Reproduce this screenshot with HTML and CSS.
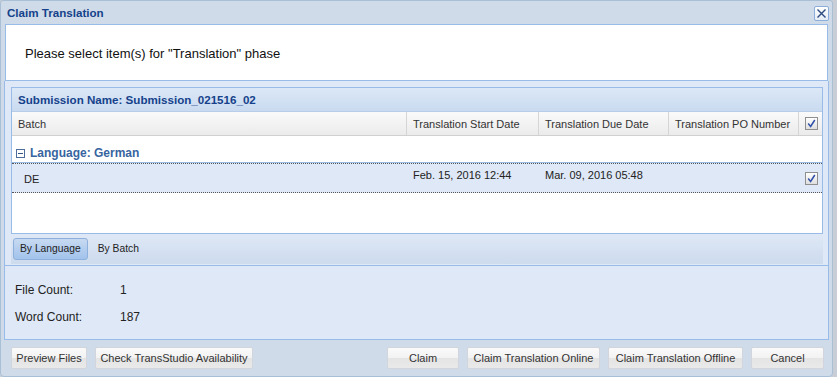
FILE: index.html
```html
<!DOCTYPE html>
<html>
<head>
<meta charset="utf-8">
<link rel="stylesheet" href="styles.css">
</head>
<body>
<div class="win">
  <div class="win-head">
    <span class="title">Claim Translation</span>
    <span class="close"><svg width="11" height="11" viewBox="0 0 11 11"><path d="M1.5 1.5 L9.5 9.5 M9.5 1.5 L1.5 9.5" stroke="#2c4a7e" stroke-width="1.4" fill="none"/></svg></span>
  </div>
  <div class="intro">Please select item(s) for "Translation" phase</div>
  <div class="main">
    <div class="grid">
      <div class="grid-title">Submission Name: Submission_021516_02</div>
      <div class="cols">
        <div class="col c-batch">Batch</div>
        <div class="col c-start">Translation Start Date</div>
        <div class="col c-due">Translation Due Date</div>
        <div class="col c-po">Translation PO Number</div>
        <div class="col c-chk"><span class="chk"><svg width="9" height="9" viewBox="0 0 9 9"><path d="M1.2 4.6 L3.6 7.4 L7.8 1" stroke="#2f4fa8" stroke-width="1.5" fill="none"/></svg></span></div>
      </div>
      <div class="grid-body">
        <div class="group"><span class="minus"></span>Language: German</div>
        <div class="row">
          <div class="cell c-batch dd">DE</div>
          <div class="cell c-start">Feb. 15, 2016 12:44</div>
          <div class="cell c-due">Mar. 09, 2016 05:48</div>
          <div class="cell c-po"></div>
          <div class="cell c-chk"><span class="chk"><svg width="9" height="9" viewBox="0 0 9 9"><path d="M1.2 4.6 L3.6 7.4 L7.8 1" stroke="#2f4fa8" stroke-width="1.5" fill="none"/></svg></span></div>
        </div>
      </div>
    </div>
    <div class="tabs">
      <span class="tab on">By Language</span>
      <span class="tab">By Batch</span>
    </div>
    <div class="counts">
      <div class="count"><span class="lbl">File Count:</span><span>1</span></div>
      <div class="count"><span class="lbl">Word Count:</span><span>187</span></div>
    </div>
  </div>
  <div class="foot">
    <span class="btn w76">Preview Files</span>
    <span class="btn w158">Check TransStudio Availability</span>
    <span class="spacer"></span>
    <span class="btn w72">Claim</span>
    <span class="btn w133">Claim Translation Online</span>
    <span class="btn w135">Claim Translation Offline</span>
    <span class="btn w73">Cancel</span>
  </div>
</div>
</body>
</html>
```

FILE: styles.css
```css
* { box-sizing: border-box; }
html, body { margin: 0; padding: 0; }
body {
  background: #c9ced6;
  font-family: "Liberation Sans", Arial, sans-serif;
  font-size: 11px;
  color: #222;
  width: 837px;
  height: 377px;
  overflow: hidden;
}
.win {
  width: 833px;
  height: 377px;
  background: #cfdbe8;
  border: 1px solid #a9bfd6;
  border-radius: 3px 3px 4px 4px;
  display: flex;
  flex-direction: column;
}
.win-head {
  height: 23px;
  display: flex;
  align-items: center;
  justify-content: space-between;
  padding: 0 3px 0 6px;
}
.title {
  font-weight: bold;
  color: #15428b;
  font-size: 11.6px;
}
.close {
  width: 15px;
  height: 15px;
  border: 1px solid #8daed8;
  border-radius: 2px;
  background: linear-gradient(#ffffff, #e4ecf6);
  display: flex;
  align-items: center;
  justify-content: center;
  margin-top: 1px;
}
.intro {
  margin: 0 4px 0 4px;
  height: 57px;
  background: #fff;
  border: 1px solid #99bbe8;
  padding-left: 19px;
  display: flex;
  align-items: center;
  padding-top: 1px;
  font-size: 13px;
  color: #111;
}
.main {
  margin: 0 3px 0 3px;
  height: 259px;
  background: #dfe8f6;
  border: 1px solid #99bbe8;
  border-top: none;
  display: flex;
  flex-direction: column;
}
.grid {
  margin: 6px 5px 0 6px;
  height: 147px;
  border: 1px solid #99bbe8;
  background: #fff;
  display: flex;
  flex-direction: column;
}
.grid-title {
  height: 24px;
  background: linear-gradient(#dce8f6, #c9daf0);
  border-bottom: 1px solid #b7cde9;
  font-weight: bold;
  font-size: 11.6px;
  color: #15428b;
  padding: 0 6px;
  display: flex;
  align-items: center;
}
.cols {
  height: 24px;
  display: flex;
  background: linear-gradient(#fafafa, #ebebeb);
  border-bottom: 1px solid #d0d0d0;
}
.col {
  display: flex;
  align-items: center;
  padding: 0 6px;
  border-right: 1px solid #d5d5d5;
  color: #333;
}
.c-batch { width: 395px; flex: none; }
.c-start { width: 132px; flex: none; }
.c-due { width: 130px; flex: none; }
.c-po { width: 130px; flex: none; }
.c-chk { flex: 1; justify-content: center; border-right: none; }
.chk {
  width: 13px;
  height: 13px;
  border: 1px solid #8f8f8f;
  background: linear-gradient(#ffffff, #dedede);
  display: flex;
  align-items: center;
  justify-content: center;
}
.grid-body { flex: 1; }
.group {
  height: 28px;
  border-bottom: 2px solid #99bbe8;
  display: flex;
  align-items: center;
  padding-left: 4px;
  padding-top: 8px;
  font-weight: bold;
  font-size: 12px;
  color: #3764a0;
}
.minus {
  width: 9px;
  height: 9px;
  border: 1px solid #4d6d9d;
  margin-right: 5px;
  position: relative;
  background: #fff;
}
.minus::after {
  content: "";
  position: absolute;
  left: 1px;
  right: 1px;
  top: 3px;
  height: 1px;
  background: #36568a;
}
.row {
  height: 30px;
  display: flex;
  background: #dfe8f6;
  border-top: 1px dotted #555;
  border-bottom: 1px dotted #555;
  margin-top: -1px;
}
.cell {
  padding: 5px 6px 0;
  color: #222;
}
.cell.dd { padding-top: 9px; padding-left: 12px; }
.cell.c-chk { display: flex; padding-top: 8px; }
.tabs {
  margin: 0 5px 0 6px;
  height: 30px;
  background: linear-gradient(#dfe8f6, #cddbee);
  display: flex;
  align-items: center;
  gap: 4px;
  padding-left: 2px;
  border-bottom: 1px solid #cfdcec;
}
.tab {
  height: 22px;
  display: flex;
  align-items: center;
  padding: 0 6px;
  color: #222;
  font-size: 10.3px;
}
.tab.on {
  border: 1px solid #8eb0dc;
  border-radius: 3px;
  background: linear-gradient(#c8daf1, #b3cdee 50%, #a3c3ec);
}
.counts {
  border-top: 1px solid #99bbe8;
  margin-top: 1px;
  flex: 1;
  padding: 17px 0 0 10px;
  font-size: 12px;
}
.count { height: 27px; display: flex; }
.lbl { width: 105px; }
.foot {
  flex: 1;
  display: flex;
  align-items: flex-start;
  padding: 7px 8px 0 10px;
  gap: 8px;
}
.spacer { flex: 1; }
.btn {
  height: 22px;
  border: 1px solid #d2d6dc;
  border-radius: 2px;
  background: linear-gradient(#fafafa, #f2f2f2 50%, #e4e4e4 51%, #e9e9e9);
  display: flex;
  align-items: center;
  justify-content: center;
  color: #333;
  font-size: 11px;
}
.w76 { width: 76px; }
.w158 { width: 158px; }
.w72 { width: 72px; }
.w133 { width: 133px; }
.w135 { width: 135px; }
.w73 { width: 73px; }
```
